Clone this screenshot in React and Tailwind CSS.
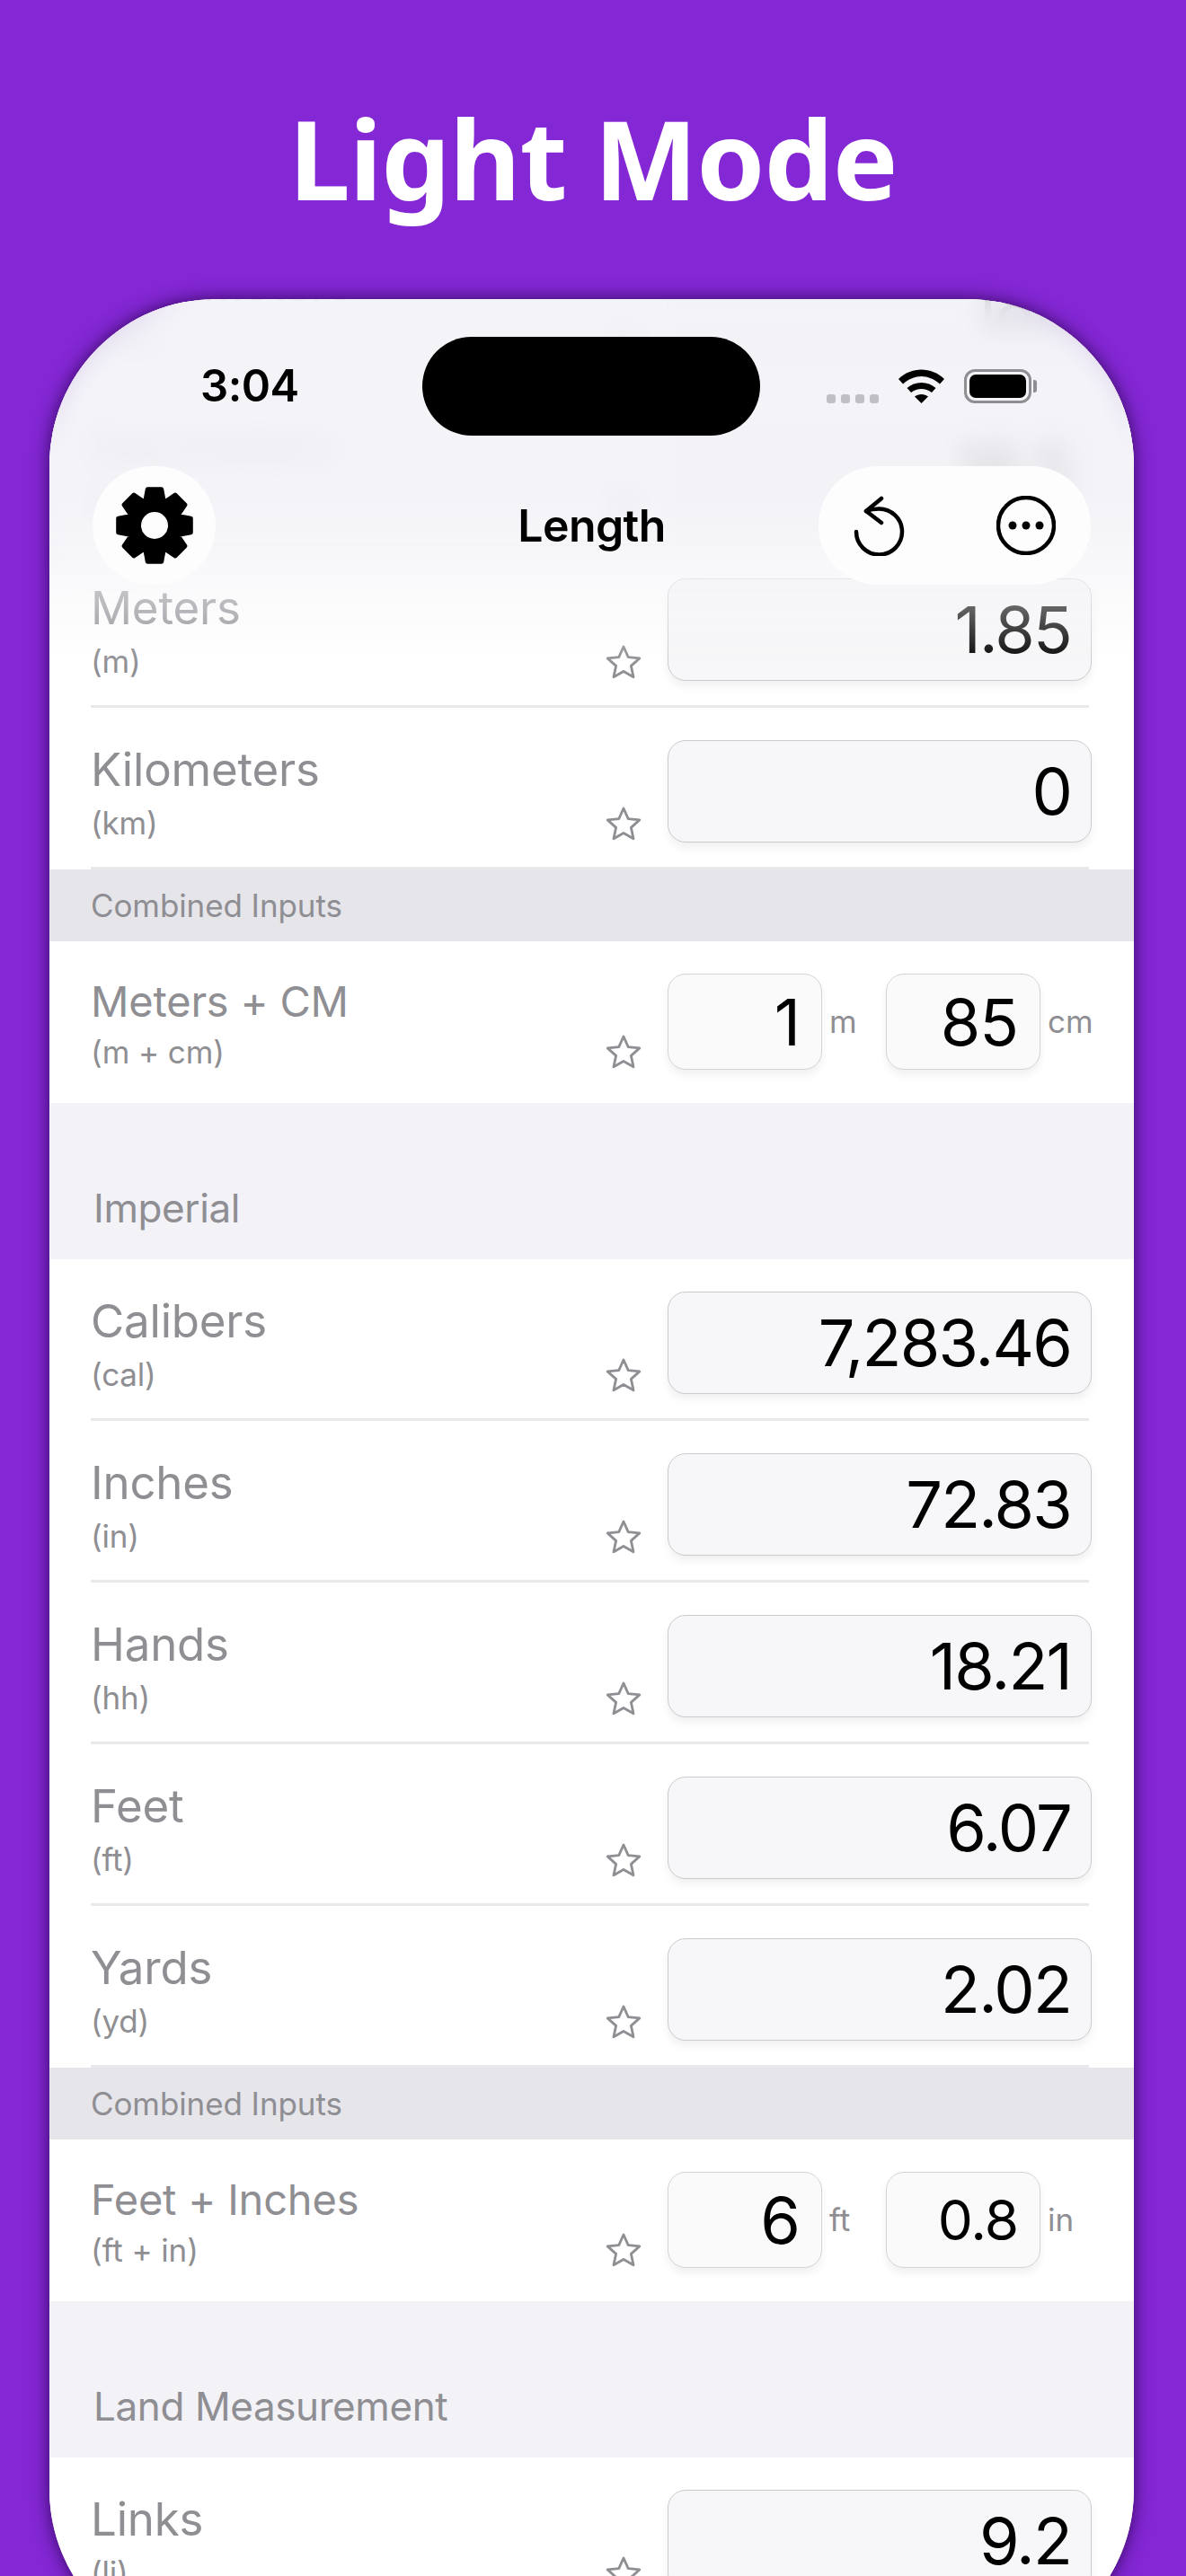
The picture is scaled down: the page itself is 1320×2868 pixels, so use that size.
import React from 'react';

const gearPath = (() => {
  // 8 tooth cog, drawn from the center of a 90x90 box
  const pts = [];
  for (let i = 0; i < 8; i++) {
    const a = (i * Math.PI) / 4 - Math.PI / 2;
    [[-0.36, 29], [-0.19, 41], [0.19, 41], [0.36, 29]].forEach(([d, r]) => {
      pts.push(`${(45 + r * Math.cos(a + d)).toFixed(1)} ${(45 + r * Math.sin(a + d)).toFixed(1)}`);
    });
  }
  return 'M' + pts.join('L') + 'Z';
})();

const Star = () => (
  <svg width="40" height="38" viewBox="0 0 40 38" className="shrink-0">
    <path d="M20 2l5.2 11.6 12.6 1.3-9.4 8.5 2.6 12.4L20 29.5 9 35.8l2.6-12.4-9.4-8.5 12.6-1.3z" fill="none" stroke="#8e8e93" strokeWidth="2.8" strokeLinejoin="round" />
  </svg>
);

const Row = ({ name, abbr, value }) => (
  <div className="bg-white">
    <div className="ml-[46px] mr-[50px] h-[180px] flex border-b-[3px] border-[#e9e9eb]">
      <div className="flex-1 min-w-0 pt-[41px]">
        <p className="text-[51px] leading-[56px] text-[#8e8e93] tracking-[-0.2px]">{name}</p>
        <p className="text-[35px] leading-[42px] mt-[10px] text-[#8e8e93] tracking-[-0.2px]">{abbr}</p>
      </div>
      <div className="self-end mb-[29px] mr-[29px]"><Star /></div>
      <div className="w-[472px] h-[114px] mt-[36px] -mr-[3px] shrink-0 flex items-center justify-end pr-[22px] rounded-[20px] bg-[#f7f7f9] border border-[#cbcbce] shadow-[0_6px_10px_rgba(0,0,0,0.06)] text-[72px] text-black tracking-[-1.8px]">
        {value}
      </div>
    </div>
  </div>
);

const SmallInput = ({ value, unit, small, width }) => (
  <div className={`flex items-center shrink-0 ${width}`}>
    <div className={`w-[172px] h-[107px] shrink-0 flex items-center justify-end pr-[24px] rounded-[20px] bg-[#fafafa] border border-[#d4d4d7] shadow-[0_6px_10px_rgba(0,0,0,0.06)] text-black tracking-[-1px] ${small ? 'text-[62px]' : 'text-[72px]'}`}>
      {value}
    </div>
    <span className="ml-[8px] text-[35px] text-[#8e8e93]">{unit}</span>
  </div>
);

const CombinedRow = ({ name, abbr, a, b }) => (
  <div className="bg-white">
    <div className="ml-[46px] mr-[47px] h-[180px] flex">
      <div className="flex-1 min-w-0 pt-[39px]">
        <p className="text-[47px] leading-[56px] text-[#8e8e93] tracking-[-0.2px]">{name}</p>
        <p className="text-[35px] leading-[42px] mt-[7px] text-[#8e8e93] tracking-[-0.1px]">{abbr}</p>
      </div>
      <div className="self-end mb-[38px] mr-[29px]"><Star /></div>
      <div className="flex h-[107px] mt-[36px] w-[472px] shrink-0">
        <SmallInput {...a} width="w-[243px]" />
        <SmallInput {...b} width="w-[229px]" />
      </div>
    </div>
  </div>
);

const Band = () => (
  <div className="h-[80px] bg-[#e5e5ea] pl-[46px] flex items-center text-[35px] text-[#8e8e93] tracking-[-0.1px]">Combined Inputs</div>
);

const Section = ({ title }) => (
  <div className="h-[174px] bg-[#f2f2f7] pl-[49px] flex items-end pb-[24px] text-[44px] text-[#8e8e93] tracking-[-0.4px]">{title}</div>
);

const TopBar = () => (
  <div className="absolute inset-x-0 top-0">
    {/* blur and tint fade out separately, the tint reaches further down */}
    <div className="absolute inset-x-0 top-0 h-[330px] backdrop-blur-[14px] [mask-image:linear-gradient(to_bottom,black_78%,transparent_100%)]" />
    <div className="absolute inset-x-0 top-0 h-[410px] bg-[linear-gradient(to_bottom,rgba(242,242,247,0.86)_0%,rgba(242,242,247,0.86)_55%,rgba(246,246,249,0.45)_82%,rgba(255,255,255,0)_100%)]" />
    <div className="relative">
      {/* status bar */}
      <div className="flex items-center h-[110px] mt-[42px]">
        <div className="w-[415px] pl-[168px] text-[49px] font-semibold text-black tracking-[-0.5px]">3:04</div>
        <div className="w-[376px] h-[110px] rounded-[55px] bg-black shrink-0" />
        <div className="flex-1 flex items-end pl-[74px] h-[38px]">
          <div className="flex gap-[6px]">
            {[0, 1, 2, 3].map(i => <div key={i} className="w-[10px] h-[10px] rounded-[3px] bg-[#c0c0c4]" />)}
          </div>
          <svg width="51" height="38" viewBox="0 0 51 38" className="ml-[22px]">
            <path d="M0 11C14-3 37-3 51 11l-5 5.5C33 5 18 5 5 16.5z" fill="#000" />
            <path d="M9.5 21C18 13 33 13 41.5 21L37 26c-7-5.5-16-5.5-23 0z" fill="#000" />
            <path d="M18 30.5c4-3.500 11-3.500 15 0L25.500 38z" fill="#000" />
          </svg>
          <div className="ml-[22px] w-[75px] h-[38px] rounded-[12px] border-[3px] border-[#8e8e93] p-[3px]">
            <div className="w-full h-full rounded-[7px] bg-black" />
          </div>
          <div className="w-[4px] h-[14px] mb-[12px] ml-[2px] rounded-r-[3px] bg-[#8e8e93]" />
        </div>
      </div>
      {/* nav bar */}
      <div className="grid grid-cols-[1fr_auto_1fr] items-center mt-[34px] px-[48px]">
        <div>
          <div className="w-[137px] h-[132px] rounded-full bg-[#fdfdfe] flex items-center justify-center">
            <svg width="90" height="90" viewBox="0 0 90 90">
              <path d={gearPath} fill="#000" stroke="#000" strokeWidth="5" strokeLinejoin="round" />
              <circle cx="45" cy="45" r="15" fill="#fdfdfe" />
            </svg>
          </div>
        </div>
        <div className="text-[50px] font-semibold text-black tracking-[-0.6px]">Length</div>
        <div className="flex justify-end">
          <div className="w-[303px] h-[132px] rounded-[66px] bg-[#fdfdfe] flex items-center justify-between pl-[39px] pr-[39px]">
            <svg width="57" height="67" viewBox="0 0 57 67" fill="none" stroke="#000" strokeWidth="4.500" strokeLinecap="round" strokeLinejoin="round">
              <path d="M3 40A25.500 25.500 0 1 0 28 14.500C23 14.500 18 15.500 14 17" />
              <path d="M31 3L14 17l17 13" />
            </svg>
            <svg width="66" height="66" viewBox="0 0 66 66">
              <circle cx="33" cy="33" r="31" fill="none" stroke="#000" strokeWidth="4.500" />
              <circle cx="18" cy="33" r="4.500" fill="#000" />
              <circle cx="33" cy="33" r="4.500" fill="#000" />
              <circle cx="48" cy="33" r="4.500" fill="#000" />
            </svg>
          </div>
        </div>
      </div>
    </div>
  </div>
);

export default function App() {
  return (
    <div className="h-[2868px] overflow-hidden bg-[#8427d5] font-['Inter',sans-serif]">
      <div className="h-[333px] flex justify-center pt-[101px]">
        <h1 className="text-[122px] leading-[150px] font-bold text-white font-['Noto_Sans',sans-serif] tracking-[-1px]">Light Mode</h1>
      </div>

      <div className="relative ml-[55px] w-[1207px] h-[2624px] rounded-[185px] overflow-hidden bg-[#f2f2f7] shadow-[0_0_20px_rgba(30,0,60,0.8)]">
        <div className="-mt-[85px]">
          <Row name="Centimeters" abbr="(cm)" value="185" />
          <Row name="Decimeters" abbr="(dm)" value="18.5" />
          <Row name="Meters" abbr="(m)" value="1.85" />
          <Row name="Kilometers" abbr="(km)" value="0" />
          <Band />
          <CombinedRow name="Meters + CM" abbr="(m + cm)" a={{ value: '1', unit: 'm' }} b={{ value: '85', unit: 'cm' }} />
          <Section title="Imperial" />
          <Row name="Calibers" abbr="(cal)" value="7,283.46" />
          <Row name="Inches" abbr="(in)" value="72.83" />
          <Row name="Hands" abbr="(hh)" value="18.21" />
          <Row name="Feet" abbr="(ft)" value="6.07" />
          <Row name="Yards" abbr="(yd)" value="2.02" />
          <Band />
          <CombinedRow name="Feet + Inches" abbr="(ft + in)" a={{ value: '6', unit: 'ft' }} b={{ value: '0.8', unit: 'in', small: true }} />
          <Section title="Land Measurement" />
          <Row name="Links" abbr="(li)" value="9.2" />
        </div>
        <TopBar />
      </div>
    </div>
  );
}
